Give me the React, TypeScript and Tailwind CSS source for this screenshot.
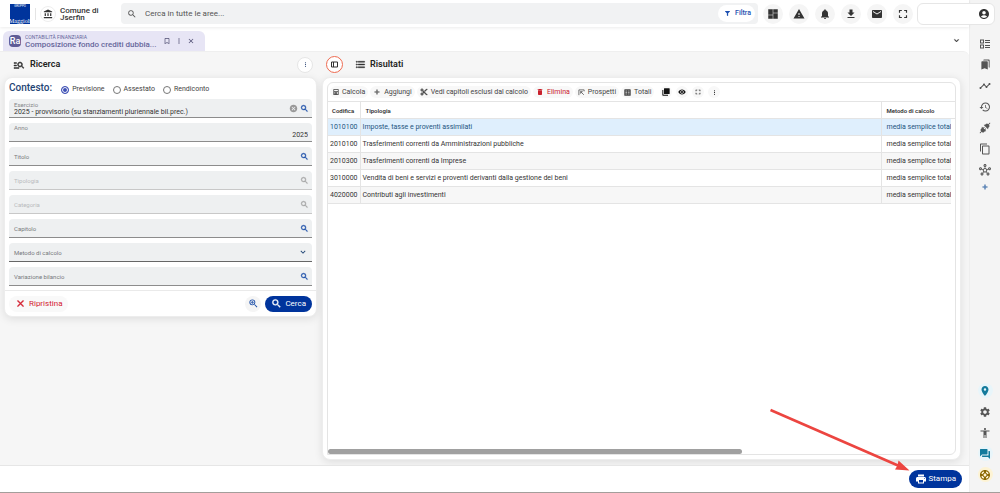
import { useState, type ReactNode } from "react";
import clsx from "clsx";
import { FaCalculator, FaFilter } from "react-icons/fa";
import { PiPlugsFill } from "react-icons/pi";
import {
  MdAccessibility,
  MdAccountBalance,
  MdAccountCircle,
  MdAdd,
  MdBookmarkBorder,
  MdBookmarks,
  MdCancel,
  MdClose,
  MdContentCut,
  MdDashboard,
  MdDelete,
  MdDownload,
  MdEmail,
  MdExpandMore,
  MdFormatListBulleted,
  MdForum,
  MdFullscreen,
  MdHistory,
  MdLocationOn,
  MdManageSearch,
  MdMoreVert,
  MdNotifications,
  MdOutlineContentCopy,
  MdOutlineHub,
  MdPrint,
  MdSearch,
  MdSettings,
  MdSupport,
  MdTimeline,
  MdVisibility,
  MdWarning,
  MdZoomIn,
} from "react-icons/md";

const rows = [
  { code: "1010100", name: "Imposte, tasse e proventi assimilati" },
  { code: "2010100", name: "Trasferimenti correnti da Amministrazioni pubbliche" },
  { code: "2010300", name: "Trasferimenti correnti da Imprese" },
  { code: "3010000", name: "Vendita di beni e servizi e proventi derivanti dalla gestione dei beni" },
  { code: "4020000", name: "Contributi agli investimenti" },
];

// the first path of a material icon is its empty bounding box
const bold = "[&>path:last-child]:stroke-1";

const BallotIcon = () => (
  <svg viewBox="0 0 24 24" className="size-3" fill="none" stroke="currentColor" strokeWidth="2">
    <rect x="3" y="4" width="6" height="6" />
    <rect x="3" y="14" width="6" height="6" />
    <path d="M12 5h10M12 9h10M12 15h10M12 19h10" />
  </svg>
);

const PanelIcon = () => (
  <svg viewBox="0 0 7 7" className="size-[7px]" fill="none" stroke="currentColor">
    <path d="M0.5 1v5h6V1zM2.5 1v5" />
  </svg>
);

const StackIcon = () => (
  <svg viewBox="0 0 24 24" className="size-2" fill="currentColor">
    <path d="M7 1h15a1 1 0 0 1 1 1v15a1 1 0 0 1-1 1H7a1 1 0 0 1-1-1V2a1 1 0 0 1 1-1z" />
    <path d="M1 6h3v14h14v3H3a2 2 0 0 1-2-2z" />
  </svg>
);

const ReportIcon = () => (
  <svg viewBox="0 0 24 24" className="size-[7px]" fill="none" stroke="currentColor" strokeWidth="2.5">
    <path d="M3 21V3h18v5M9 9l11 11M9 16V9h7" />
  </svg>
);

const TableIcon = () => (
  <svg viewBox="0 0 24 24" className="size-[7px]">
    <rect x="1" y="1" width="22" height="22" rx="2" fill="currentColor" />
    <path d="M5 7h6M5 12h6M5 17h6M14 7h5M14 12h5M14 17h5" stroke="#fff" strokeWidth="2" />
  </svg>
);

const RoundButton = ({ label, children }: { label: string; children: ReactNode }) => (
  <button
    type="button"
    aria-label={label}
    className="flex size-5 items-center justify-center rounded-full bg-[#f5f5f5] text-[#333]">
    {children}
  </button>
);

const ToolButton = ({
  icon,
  text,
  danger,
}: {
  icon: ReactNode;
  text: string;
  danger?: boolean;
}) => (
  <button
    type="button"
    className={clsx(
      "flex h-3 items-center gap-[3px] whitespace-nowrap rounded-full bg-[#f8f8f8] px-[3px] text-[7px]",
      danger ? "text-[#c9202c]" : "text-[#444]"
    )}>
    {icon}
    {text}
  </button>
);

const SmallTool = ({ label, children }: { label: string; children: ReactNode }) => (
  <button
    type="button"
    aria-label={label}
    className="flex size-3 items-center justify-center rounded-full bg-[#f8f8f8] text-[#111]">
    {children}
  </button>
);

const SearchField = ({ id, label, disabled }: { id: string; label: string; disabled?: boolean }) => (
  <div
    className={clsx(
      "flex h-[19px] items-center rounded-t border-b bg-[#eef0f1] pl-[5px] pr-[3px]",
      disabled ? "border-[#c8c8c8] text-[#b9bbbd]" : "border-[#8c8c8c] text-[#77797c]"
    )}>
    <label htmlFor={id} className="text-[6px]">
      {label}
    </label>
    <input id={id} disabled={disabled} className="h-3 min-w-0 flex-1 bg-transparent px-1 text-[7px] outline-none" />
    <button
      type="button"
      disabled={disabled}
      aria-label={`Cerca ${label}`}
      className={disabled ? "text-[#a5a5a5]" : "text-[#1c4fa8]"}>
      <MdSearch size={9} className={bold} />
    </button>
  </div>
);

const TopBar = () => (
  <header className="relative z-10 flex h-[27px] items-center bg-white pl-[10px] shadow-[0_1px_3px_rgba(0,0,0,0.08)]">
    <div className="flex size-5 shrink-0 flex-col items-center justify-between overflow-hidden bg-[#00349c] text-white">
      <span className="h-1 pt-px text-[3px] leading-[3px]">GRUPPO</span>
      <span className="font-['Liberation_Serif',serif] text-[6px] leading-[6px]">Maggioli</span>
    </div>
    <span className="ml-[5px] h-3 w-px bg-[#e4e4e4]" />
    <button
      type="button"
      aria-label="Ente"
      className="ml-1 flex size-4 shrink-0 items-center justify-center rounded-full border border-[#eee] text-[#333]">
      <MdAccountBalance size={10} />
    </button>
    <div className="ml-1 w-[60px] shrink-0 text-[8px] font-medium leading-[7px] text-[#333]">
      Comune di
      <br />
      Jserfin
    </div>
    <div className="ml-px flex h-[21px] min-w-0 flex-1 items-center rounded bg-[#f1f2f3] pl-1.5 pr-[3px]">
      <MdSearch size={10} className="text-[#555]" />
      <input
        aria-label="Cerca"
        placeholder="Cerca in tutte le aree..."
        className="ml-2 min-w-0 flex-1 bg-transparent text-[8px] text-[#333] outline-none placeholder:text-[#555]"
      />
      <button
        type="button"
        className="flex h-[17px] items-center gap-[5px] rounded-full bg-white pl-[7px] pr-1 text-[7px] font-medium text-[#1c4fb0]">
        <FaFilter size={5} />
        Filtra
      </button>
    </div>
    <div className="ml-[5px] flex gap-1.5">
      <RoundButton label="Dashboard"><MdDashboard size={12} className={bold} /></RoundButton>
      <RoundButton label="Avvisi"><MdWarning size={12} /></RoundButton>
      <RoundButton label="Notifiche"><MdNotifications size={12} /></RoundButton>
      <RoundButton label="Download"><MdDownload size={12} /></RoundButton>
      <RoundButton label="Posta"><MdEmail size={12} /></RoundButton>
      <RoundButton label="Schermo intero"><MdFullscreen size={14} /></RoundButton>
    </div>
    <button
      type="button"
      aria-label="Profilo"
      className="-mr-[26px] ml-1 flex h-[22px] w-[78px] items-center justify-end rounded-md border border-[#e6e6e6] bg-white pr-1 text-[#333]">
      <MdAccountCircle size={12} />
    </button>
  </header>
);

const TabStrip = () => (
  <div className="flex h-6 items-end justify-between bg-white pl-[3px] pr-2">
    <div className="flex h-5 w-[202px] items-center rounded-t-md bg-[#e7e5f5] pl-1.5 text-[#66659b]">
      <span className="flex size-3 items-center justify-center rounded bg-[#5f5c96] text-[9px] font-medium leading-3 text-white">
        Ra
      </span>
      <a href="#" className="ml-1 block w-[138px] overflow-hidden">
        <span className="block text-[5px] leading-[7px]">CONTABILITÀ FINANZIARIA</span>
        <span className="block whitespace-nowrap text-[8px] font-medium leading-2">
          Composizione fondo crediti dubbia...
        </span>
      </a>
      <div className="flex items-center gap-1 text-[#4d4c70]">
        <button type="button" aria-label="Segnalibro"><MdBookmarkBorder size={8} /></button>
        <button type="button" aria-label="Menu scheda"><MdMoreVert size={8} /></button>
        <button type="button" aria-label="Chiudi"><MdClose size={8} /></button>
      </div>
    </div>
    <button type="button" aria-label="Espandi" className="mb-1.5 text-[#333]">
      <MdExpandMore size={9} className={bold} />
    </button>
  </div>
);

const SearchPanel = () => {
  const [context, setContext] = useState("Previsione");

  return (
    <section className="w-[313px] shrink-0">
      <div className="flex h-[25px] items-center pl-[9px] pr-1">
        <MdManageSearch size={12} className={clsx("text-[#333]", bold)} />
        <h2 className="ml-[5px] flex-1 text-[9px] font-semibold text-[#222]">Ricerca</h2>
        <button
          type="button"
          aria-label="Opzioni"
          className="flex size-4 items-center justify-center rounded-full border border-[#e6e6e6] bg-white text-[#1e3a6b]">
          <MdMoreVert size={7} />
        </button>
      </div>
      <form
        className="rounded-lg border border-[#ededed] bg-white shadow-[0_2px_8px_rgba(0,0,0,0.1)]"
        onSubmit={(e) => e.preventDefault()}>
        <div className="flex flex-col gap-[5px] px-1 pb-1 pt-[2px]">
          <fieldset className="flex h-[14px] items-center text-[7px] text-[#444]">
            <legend className="float-left mr-[9px] pt-px text-[10px] font-medium leading-[14px] text-[#1f4474]">Contesto:</legend>
            <div className="flex items-center gap-2 pt-1">
              {["Previsione", "Assestato", "Rendiconto"].map((item) => (
                <label key={item} className="flex items-center gap-[3px]">
                  <input
                    type="radio"
                    name="context"
                    checked={context === item}
                    onChange={() => setContext(item)}
                    className="size-2 appearance-none rounded-full border border-[#777] checked:border-[#3f51b5] checked:bg-[#3f51b5] checked:shadow-[inset_0_0_0_1px_#fff]"
                  />
                  {item}
                </label>
              ))}
            </div>
          </fieldset>
          <div className="flex h-[19px] items-center rounded-t border-b border-[#8c8c8c] bg-[#eef0f1] pl-[5px] pr-[3px]">
            <div className="flex min-w-0 flex-1 flex-col">
              <label htmlFor="year" className="text-[6px] leading-[7px] text-[#85878a]">Esercizio</label>
              <input
                id="year"
                defaultValue="2025 - provvisorio (su stanziamenti pluriennale bil.prec.)"
                className="h-2 bg-transparent text-[7px] leading-2 text-[#333] outline-none"
              />
            </div>
            <button type="button" aria-label="Cancella" className="mr-[2px] text-[#999]"><MdCancel size={9} /></button>
            <button type="button" aria-label="Cerca Esercizio" className="text-[#1c4fa8]">
              <MdSearch size={9} className={bold} />
            </button>
          </div>
          <div className="flex h-[19px] flex-col rounded-t border-b border-[#8c8c8c] bg-[#eef0f1] pl-[5px] pr-1 pt-px">
            <label htmlFor="anno" className="text-[6px] leading-[7px] text-[#85878a]">Anno</label>
            <input
              id="anno"
              defaultValue="2025"
              className="h-2 bg-transparent text-right text-[7px] leading-2 text-[#333] outline-none"
            />
          </div>
          <SearchField id="titolo" label="Titolo" />
          <SearchField id="tipologia" label="Tipologia" disabled />
          <SearchField id="categoria" label="Categoria" disabled />
          <SearchField id="capitolo" label="Capitolo" />
          <div className="flex h-[19px] items-center rounded-t border-b border-[#666] bg-[#eef0f1] pl-[5px] pr-1 text-[#77797c]">
            <label htmlFor="metodo" className="text-[6px]">Metodo di calcolo</label>
            <select id="metodo" className="h-3 min-w-0 flex-1 appearance-none bg-transparent text-[7px] outline-none">
              <option value="" />
            </select>
            <MdExpandMore size={10} className="text-[#1f4474]" />
          </div>
          <SearchField id="variazione" label="Variazione bilancio" />
        </div>
        <div className="flex h-[26px] items-center border-t border-[#eaeaea] px-1">
          <button
            type="button"
            className="mr-auto flex h-4 items-center gap-[3px] rounded-full bg-[#f9f9f9] px-1.5 text-[8px] text-[#d32030]">
            <MdClose size={11} className={bold} />
            Ripristina
          </button>
          <button
            type="button"
            aria-label="Ricerca avanzata"
            className="mr-1 flex size-4 items-center justify-center rounded-full bg-[#f5f5f5] text-[#1c4fa8]">
            <MdZoomIn size={11} className={bold} />
          </button>
          <button
            type="submit"
            className="flex h-4 items-center gap-[3px] rounded-full bg-[#00349c] px-1.5 text-[8px] text-white">
            <MdSearch size={11} className={bold} />
            Cerca
          </button>
        </div>
      </form>
    </section>
  );
};

const Results = () => (
  <section className="flex min-w-0 flex-1 flex-col">
    <div className="flex h-[25px] items-center pl-1">
      <button
        type="button"
        aria-label="Mostra pannello"
        className="flex size-[17px] items-center justify-center rounded-full border border-[#ee6a50] bg-white text-[#333]">
        <PanelIcon />
      </button>
      <MdFormatListBulleted size={11} className={clsx("ml-3 text-[#333]", bold)} />
      <h2 className="ml-1 text-[9px] font-semibold text-[#222]">Risultati</h2>
    </div>
    <div className="flex min-h-0 flex-1 rounded-lg border border-[#ededed] bg-white p-1 shadow-[0_2px_8px_rgba(0,0,0,0.1)]">
      <div className="flex min-w-0 flex-1 flex-col overflow-hidden rounded-t-md rounded-br-md border border-[#e4e4e4]">
        <div className="flex h-[18px] shrink-0 items-center gap-[2px] pl-[2px]">
          <ToolButton icon={<FaCalculator size={6} />} text="Calcola" />
          <ToolButton icon={<MdAdd size={8} className={bold} />} text="Aggiungi" />
          <ToolButton icon={<MdContentCut size={8} className={bold} />} text="Vedi capitoli esclusi dal calcolo" />
          <ToolButton icon={<MdDelete size={8} />} text="Elimina" danger />
          <ToolButton icon={<ReportIcon />} text="Prospetti" />
          <ToolButton icon={<TableIcon />} text="Totali" />
          <div className="flex gap-1 pl-1">
            <SmallTool label="Copia"><StackIcon /></SmallTool>
            <SmallTool label="Visualizza"><MdVisibility size={8} /></SmallTool>
            <SmallTool label="Schermo intero"><MdFullscreen size={8} /></SmallTool>
            <SmallTool label="Altro"><MdMoreVert size={7} /></SmallTool>
          </div>
        </div>
        <table className="w-full table-fixed border-collapse text-left text-[7px] text-[#333]">
          <colgroup>
            <col className="w-8" />
            <col />
            <col className="w-[70px]" />
            <col className="w-1" />
          </colgroup>
          <thead>
            <tr className="h-[17px] border-y border-[#e4e4e4] text-[6px]">
              <th className="border-r border-[#e4e4e4] pl-1 font-semibold">Codifica</th>
              <th className="border-r border-[#e4e4e4] pl-[5px] font-semibold">Tipologia</th>
              <th className="pl-[5px] font-semibold">Metodo di calcolo</th>
              <th />
            </tr>
          </thead>
          <tbody>
            {rows.map((row, i) => (
              <tr
                key={row.code}
                className={clsx(
                  "h-[17px]",
                  i === 0 ? "bg-[#dfeffd] text-[#23557f]" : i % 2 === 0 ? "bg-[#f7f7f7]" : "bg-white"
                )}>
                <td className="border-b border-r border-[#e4e4e4] pl-[2px]">{row.code}</td>
                <td className="border-b border-r border-[#e4e4e4] pl-[2px]">{row.name}</td>
                <td className="overflow-hidden whitespace-nowrap border-b border-[#e4e4e4] pl-[5px]">
                  media semplice total
                </td>
                <td className="bg-white" />
              </tr>
            ))}
          </tbody>
        </table>
        <div className="mt-auto h-[5px] w-[66%] rounded-full bg-[#a0a0a0]" />
      </div>
    </div>
  </section>
);

const SideItem = ({ label, className, children }: { label: string; className?: string; children: ReactNode }) => (
  <button
    type="button"
    aria-label={label}
    className={clsx("flex size-[15px] items-center justify-center rounded-full", className || "text-[#555]")}>
    {children}
  </button>
);

const SideBar = () => (
  <aside className="flex w-[31px] shrink-0 flex-col items-center justify-between border-l border-[#eee] bg-[#f4f4f4] pb-[10px] pt-9">
    <div className="flex flex-col items-center gap-[6px]">
      <SideItem label="Elenco"><BallotIcon /></SideItem>
      <SideItem label="Segnalibri"><MdBookmarks size={11} /></SideItem>
      <SideItem label="Andamento"><MdTimeline size={12} /></SideItem>
      <SideItem label="Cronologia"><MdHistory size={12} /></SideItem>
      <SideItem label="Connessioni"><PiPlugsFill size={12} /></SideItem>
      <SideItem label="Copie"><MdOutlineContentCopy size={12} /></SideItem>
      <SideItem label="Rete"><MdOutlineHub size={12} /></SideItem>
      <button type="button" aria-label="Aggiungi" className="text-[#2b5fa0]">
        <MdAdd size={8} className={bold} />
      </button>
    </div>
    <div className="flex flex-col gap-[6px]">
      <SideItem label="Posizione" className="bg-[#e8f5fa] text-[#137a9c]"><MdLocationOn size={12} /></SideItem>
      <SideItem label="Impostazioni"><MdSettings size={12} /></SideItem>
      <SideItem label="Accessibilità"><MdAccessibility size={12} /></SideItem>
      <SideItem label="Messaggi" className="bg-[#e8f5fa] text-[#137a9c]"><MdForum size={12} /></SideItem>
      <SideItem label="Supporto" className="bg-[#fdf3d4] text-[#8a6500]"><MdSupport size={12} /></SideItem>
    </div>
  </aside>
);

export default function App() {
  return (
    <div className="relative flex h-screen overflow-hidden border-b border-[#a39e9b] bg-white font-['Roboto',sans-serif]">
      <div className="flex min-w-0 flex-1 flex-col">
        <TopBar />
        <TabStrip />
        <main className="flex min-h-0 flex-1 items-stretch gap-[5px] rounded-tr-md border-t border-[#efefef] bg-[#f6f6f6] pb-[5px] pl-1 pr-2">
          <SearchPanel />
          <Results />
        </main>
        <footer className="flex h-[27px] shrink-0 items-center justify-end border-t border-[#e6e6e6] bg-white pr-[7px]">
          <button
            type="button"
            className="flex h-[18px] items-center gap-px rounded-full bg-[#00349c] px-1.5 text-[8px] text-white">
            <MdPrint size={12} />
            Stampa
          </button>
        </footer>
      </div>
      <SideBar />
      <svg
        viewBox="0 0 168 64"
        className="pointer-events-none absolute bottom-[20px] right-[62px] z-20 h-16 w-[168px]">
        <path d="M0.5 2L128 57.5" stroke="#ec4540" strokeWidth="2.6" />
        <path d="M139.5 62.5L125 61.5L127.5 57.5L128.5 52.5Z" fill="#ec4540" />
      </svg>
    </div>
  );
}
